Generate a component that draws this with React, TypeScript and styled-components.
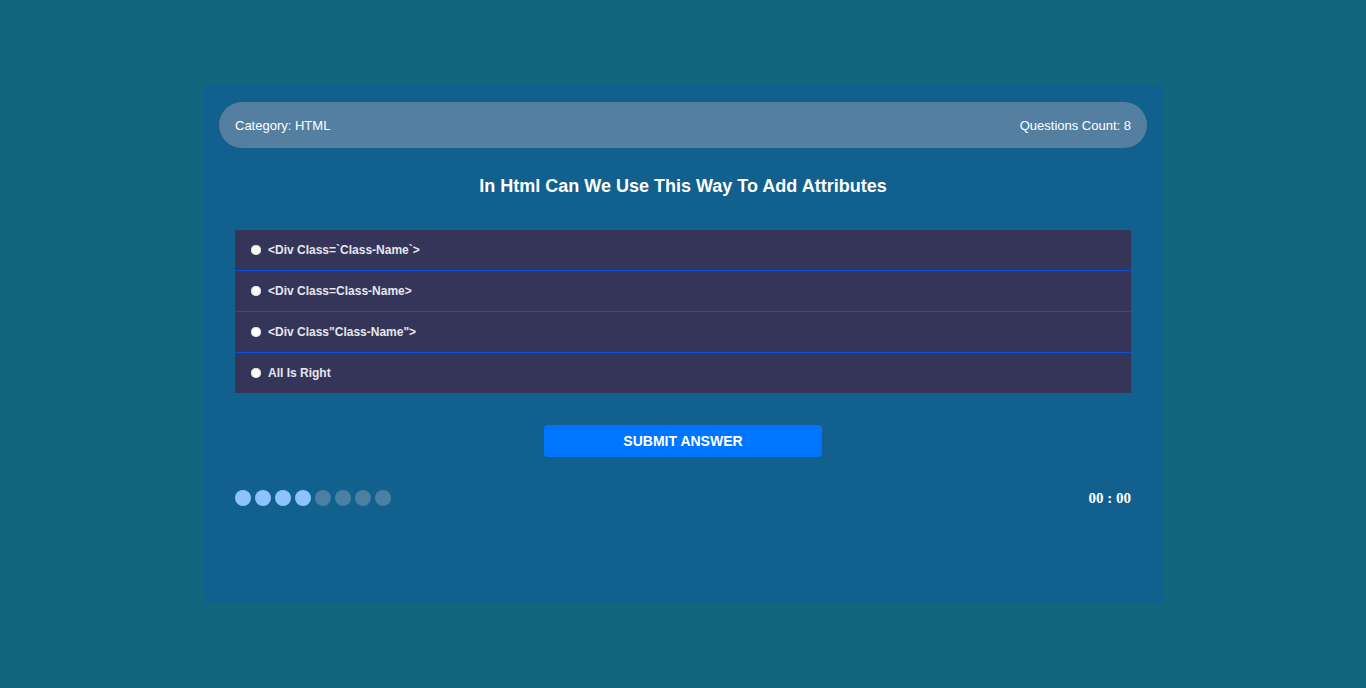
import React from "react";
import styled, { createGlobalStyle } from "styled-components";

const Global = createGlobalStyle`
  html, body { margin: 0; padding: 0; }
  body {
    background: #14657f;
    font-family: "Liberation Sans", Arial, sans-serif;
    min-height: 688px;
  }
  #root { padding-top: 86px; }
`;

const Container = styled.div`
  width: 960px;
  min-height: 517px;
  margin: 0 auto;
  background: #12608d;
  padding: 16px;
  box-sizing: border-box;
`;

const InfoBar = styled.div`
  height: 46px;
  border-radius: 23px;
  background: #557fa0;
  display: flex;
  align-items: center;
  justify-content: space-between;
  padding: 0 16px;
  color: #fff;
  font-size: 13px;
`;

const QuizArea = styled.div`
  padding: 0 16px;
`;

const Title = styled.h2`
  margin: 28px 0 0;
  font-size: 18px;
  line-height: 21px;
  font-weight: bold;
  color: #fff;
  text-align: center;
`;

const Answers = styled.div`
  margin-top: 33px;
  background: #343558;
`;

const Answer = styled.label<{ $last?: boolean }>`
  display: flex;
  align-items: center;
  height: 40px;
  padding-left: 16px;
  border-bottom: ${(p) => (p.$last ? "none" : "1px solid #0d4fe0")};
  cursor: pointer;
`;

const Radio = styled.span`
  width: 10px;
  height: 10px;
  border-radius: 50%;
  background: #fff;
  box-shadow: inset 0 0 0 1px #d8d8d8;
  margin-right: 7px;
`;

const AnswerText = styled.span`
  font-size: 12px;
  font-weight: bold;
  color: #e6e6ee;
`;

const Submit = styled.button`
  display: block;
  margin: 32px auto 0;
  width: 278px;
  height: 32px;
  border: none;
  border-radius: 4px;
  background: #0075ff;
  color: #fff;
  font-family: "Liberation Sans", Arial, sans-serif;
  font-size: 14px;
  font-weight: bold;
  text-transform: uppercase;
  cursor: pointer;
`;

const Footer = styled.div`
  margin-top: 16px;
  border-top: 1px solid #0d55e6;
  padding: 15px 16px 0;
  display: flex;
  align-items: center;
  justify-content: space-between;
`;

const Bullets = styled.div`
  display: flex;
  gap: 4px;
`;

const Bullet = styled.span<{ $on?: boolean }>`
  width: 16px;
  height: 16px;
  border-radius: 50%;
  background: ${(p) => (p.$on ? "#8cc3ff" : "#4a80a3")};
`;

const Timer = styled.div`
  font-family: "Liberation Serif", "Times New Roman", serif;
  font-weight: bold;
  font-size: 15px;
  line-height: 18px;
  color: #fff;
`;

const answers = [
  "<Div Class=`Class-Name`>",
  "<Div Class=Class-Name>",
  '<Div Class"Class-Name">',
  "All Is Right",
];

export default function App() {
  return (
    <>
      <Global />
      <Container>
        <InfoBar>
          <span>Category: HTML</span>
          <span>Questions Count: 8</span>
        </InfoBar>
        <QuizArea>
          <Title>In Html Can We Use This Way To Add Attributes</Title>
          <Answers>
            {answers.map((a, i) => (
              <Answer key={i} $last={i === answers.length - 1}>
                <Radio />
                <AnswerText>{a}</AnswerText>
              </Answer>
            ))}
          </Answers>
          <Submit>Submit Answer</Submit>
        </QuizArea>
        <Footer>
          <Bullets>
            {Array.from({ length: 8 }).map((_, i) => (
              <Bullet key={i} $on={i < 4} />
            ))}
          </Bullets>
          <Timer>00 : 00</Timer>
        </Footer>
      </Container>
    </>
  );
}
